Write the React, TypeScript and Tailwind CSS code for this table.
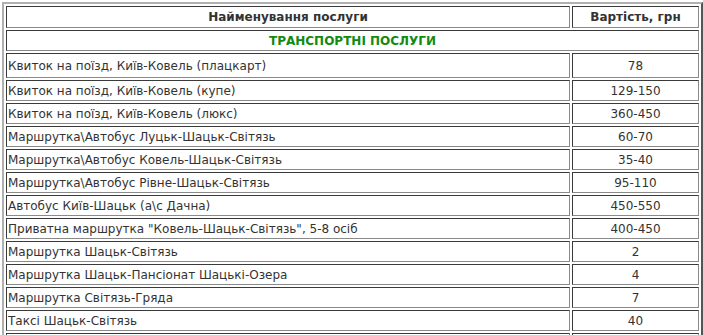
const ROWS: { name: string; price: string }[] = [
  { name: "Квиток на поїзд, Київ-Ковель (плацкарт)", price: "78" },
  { name: "Квиток на поїзд, Київ-Ковель (купе)", price: "129-150" },
  { name: "Квиток на поїзд, Київ-Ковель (люкс)", price: "360-450" },
  { name: "Маршрутка\\Автобус Луцьк-Шацьк-Світязь", price: "60-70" },
  { name: "Маршрутка\\Автобус Ковель-Шацьк-Світязь", price: "35-40" },
  { name: "Маршрутка\\Автобус Рівне-Шацьк-Світязь", price: "95-110" },
  { name: "Автобус Київ-Шацьк (а\\с Дачна)", price: "450-550" },
  { name: "Приватна маршрутка \"Ковель-Шацьк-Світязь\", 5-8 осіб", price: "400-450" },
  { name: "Маршрутка Шацьк-Світязь", price: "2" },
  { name: "Маршрутка Шацьк-Пансіонат Шацькі-Озера", price: "4" },
  { name: "Маршрутка Світязь-Гряда", price: "7" },
  { name: "Таксі Шацьк-Світязь", price: "40" },
];

const cell =
  "border border-t-[#3a3a3a] border-l-[#3a3a3a] border-b-[#8a8a8a] border-r-[#8a8a8a] p-0";

export default function App() {
  return (
    <div className="h-[335px] w-[703px] overflow-hidden bg-white font-['DejaVu_Sans',sans-serif] text-[12px] text-[#333]">
      <table className="ml-[2px] mt-[2px] w-[701px] table-fixed border-separate border-spacing-[2px] border-2 border-t-[#b0b0b0] border-l-[#b0b0b0] border-b-[#555] border-r-[#555]">
        <colgroup>
          <col className="w-[564px]" />
          <col />
        </colgroup>
        <thead>
          <tr className="h-[22px]">
            <th className={`${cell} text-center font-bold`}>Найменування послуги</th>
            <th className={`${cell} text-center font-bold`}>Вартість, грн</th>
          </tr>
        </thead>
        <tbody>
          <tr className="h-[21px]">
            <td colSpan={2} className={`${cell} text-center font-bold text-[#118a11]`}>
              ТРАНСПОРТНІ ПОСЛУГИ
            </td>
          </tr>
          {ROWS.map((row, i) => (
            <tr key={row.name} className={i === 0 ? "h-[25px]" : "h-[21px]"}>
              <td className={`${cell} pl-[1px] whitespace-nowrap`}>{row.name}</td>
              <td className={`${cell} text-center`}>{row.price}</td>
            </tr>
          ))}
          <tr className="h-[21px]">
            <td className={cell}>&nbsp;</td>
            <td className={cell}>&nbsp;</td>
          </tr>
        </tbody>
      </table>
    </div>
  );
}
